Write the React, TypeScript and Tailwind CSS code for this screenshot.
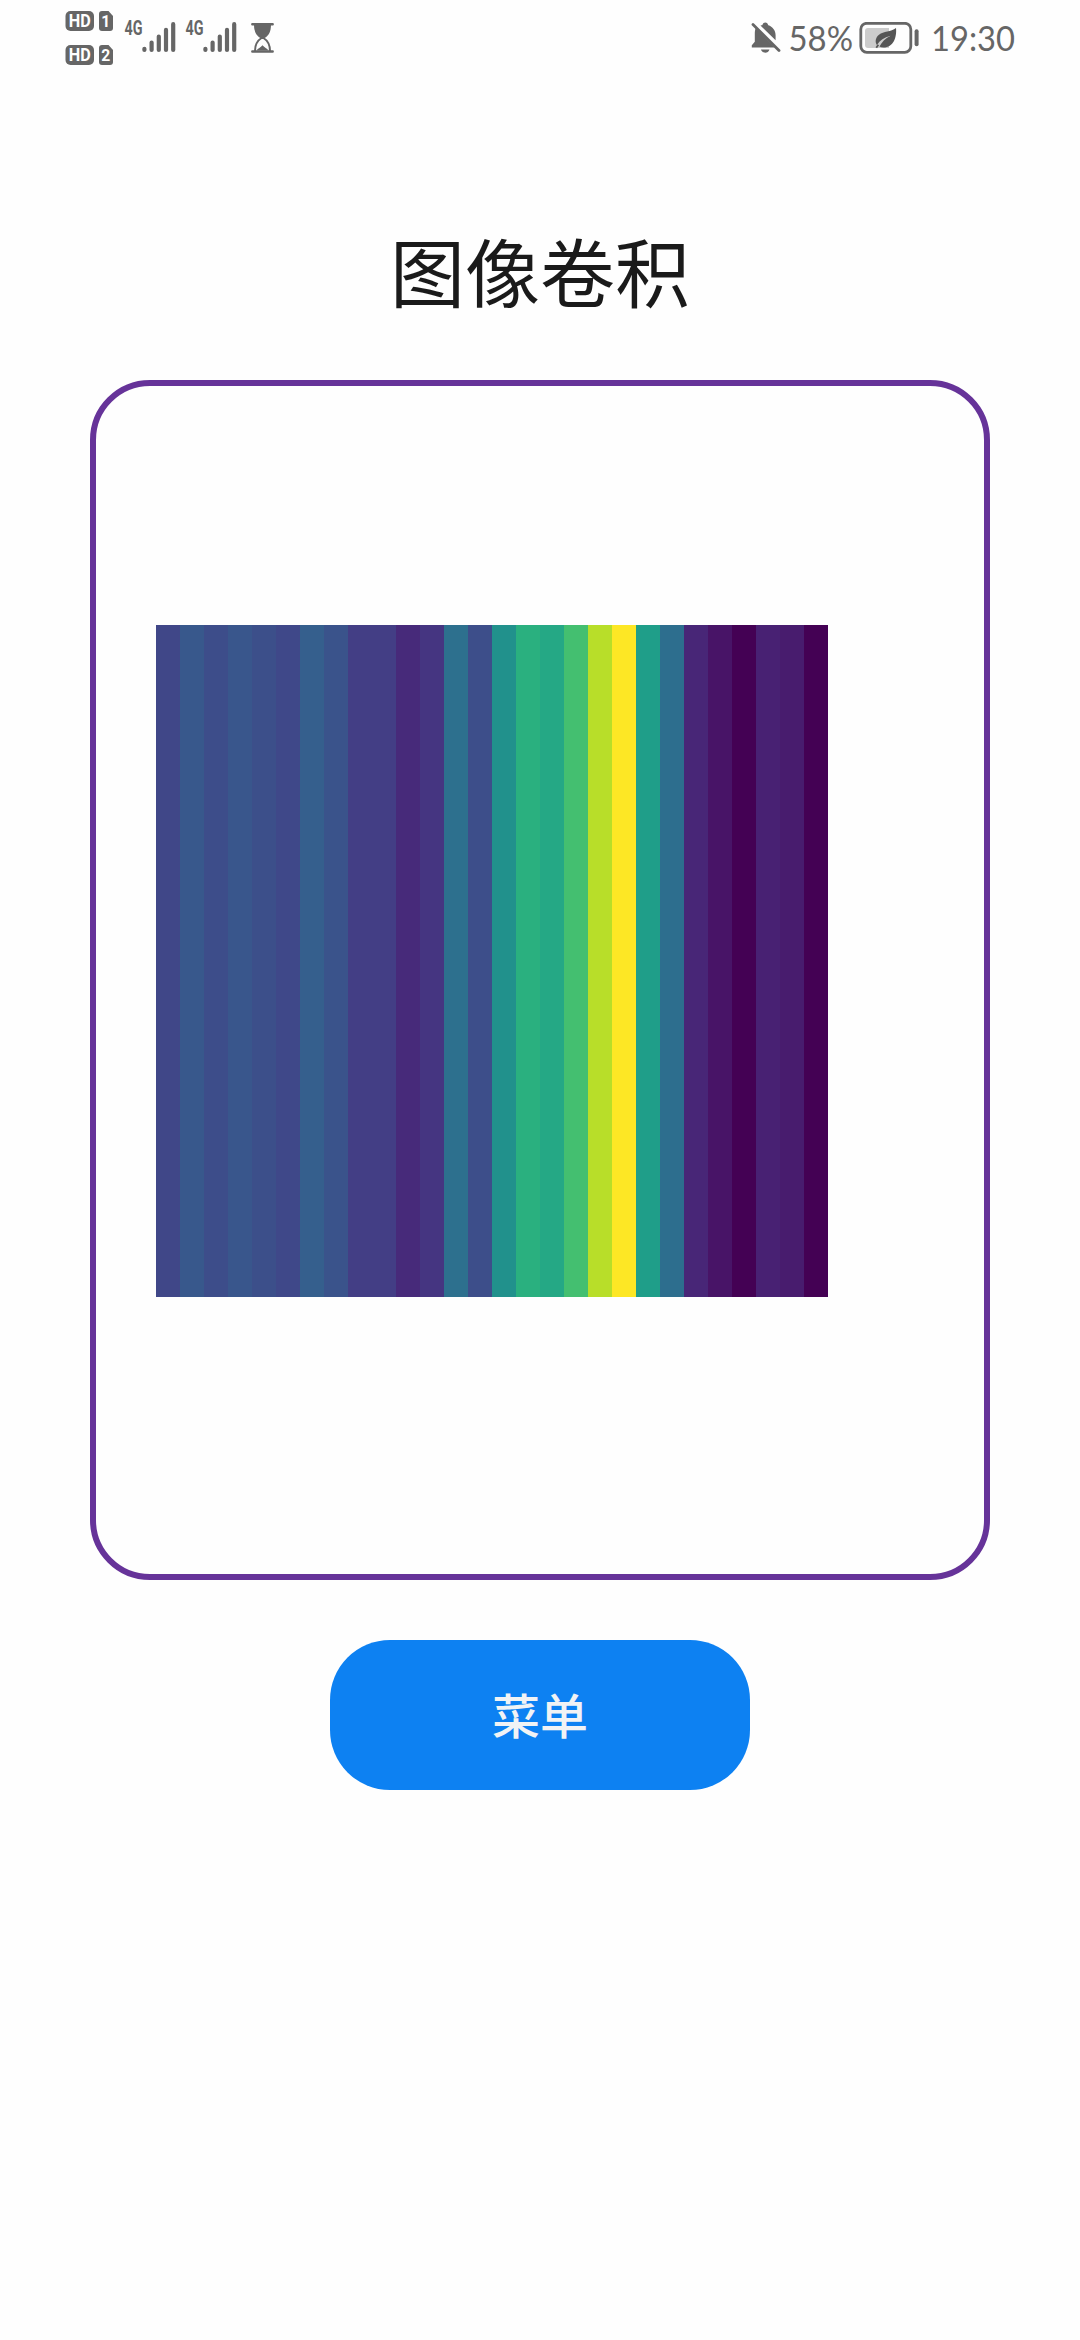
const BARS = [
  '#404788', '#38588c', '#3d4d8a', '#39568c', '#3c4f8a', '#3f4889', '#355f8d',
  '#3a538b', '#433e85', '#433e85', '#472a7a', '#453581', '#2d708e', '#3d4e8a',
  '#21918c', '#2ab07f', '#25a885', '#44bf70', '#b8de29', '#fde725', '#1f9e89',
  '#2d6e8e', '#482677', '#481467', '#440154', '#482173', '#481c6e', '#440154',
];

function HdBadge({ sim }: { sim: string }) {
  return (
    <svg width="48" height="20" viewBox="0 0 48 20" className="block overflow-visible">
      <rect x="0.500" y="0" width="28.500" height="20" rx="5" fill="#666" />
      <text x="14.700" y="16.200" fill="#fff" fontSize="17.500" fontWeight="700" textAnchor="middle" textLength="22" lengthAdjust="spacingAndGlyphs" fontFamily="Roboto, sans-serif">HD</text>
      <path d="M37 0h6.500l4.500 5v12a3 3 0 0 1-3 3h-8a3 3 0 0 1-3-3V3a3 3 0 0 1 3-3z" fill="#666" />
      <text x="40.800" y="16" fill="#fff" fontSize="17" fontWeight="700" textAnchor="middle" textLength="9" lengthAdjust="spacingAndGlyphs" fontFamily="Roboto, sans-serif">{sim}</text>
    </svg>
  );
}

function Signal() {
  return (
    <svg width="52" height="38" viewBox="0 -4 52 38" className="block overflow-visible">
      <text x="-0.500" y="15.300" fill="#666" fontSize="20" fontWeight="700" textLength="18" lengthAdjust="spacingAndGlyphs" fontFamily="Roboto, sans-serif">4G</text>
      <g stroke="#666" strokeWidth="4.200" strokeLinecap="round">
        <path d="M19.400 28.800v1.200M26.600 22.500v7.500M33.800 16.500v13.500M41 9.900v20.100M48.200 4.200v25.800" />
      </g>
    </svg>
  );
}

function Hourglass() {
  return (
    <svg width="24" height="30" viewBox="0 0 24 30" className="block">
      <path d="M1.300 1.300h20.400M1.300 28.500h20.400" stroke="#666" strokeWidth="2.400" strokeLinecap="round" />
      <path d="M3 2h17c0 6.500-2.500 11-6.500 13h-4C5.500 13 3 8.500 3 2z" fill="#666" />
      <path d="M4 28c0-7 2.500-10.500 6.500-13h2c4 2.500 6.500 6 6.500 13" fill="none" stroke="#666" strokeWidth="2" />
      <path d="M5.500 27.500c1.500-2.300 4-2.600 6-5.200 2 2.600 4.500 2.900 6 5.200z" fill="#666" />
    </svg>
  );
}

function MutedBell() {
  return (
    <svg width="30" height="32" viewBox="0 0 30 32" className="block">
      <path d="M4.700 6L23.700 25.500H.8v-2.200l3-3.500V12c0-2.500.3-4.500.9-6z" fill="#666" />
      <path d="M9.500 3.500c.6-.2 1.200-.2 1.700-.2C12 1.200 13 .6 14.300.6s2.300.6 3 2.700c4.200 1.300 7.300 5.200 7.300 10v5z" fill="#666" />
      <path d="M10 27.500h8.500c-.8 2.200-2.300 3.200-4.200 3.200S10.800 29.700 10 27.500z" fill="#666" />
      <path d="M2 2.500l26 26" stroke="#666" strokeWidth="2.800" strokeLinecap="round" />
    </svg>
  );
}

function Battery() {
  return (
    <svg width="60" height="32" viewBox="0 0 60 32" className="block">
      <rect x="1.800" y="1.300" width="50" height="29" rx="6" fill="none" stroke="#666" strokeWidth="2.800" />
      <path d="M9 6H30v20H9a3 3 0 0 1-3-3V9a3 3 0 0 1 3-3z" fill="#ccc" />
      <path d="M37 6c1 9-2.500 19.500-12.500 19.500-1.600 0-2.900-.3-4-.9 2.200-4.600 5.500-8.200 11-10.900-6.300 1.500-10.600 4.700-13.600 9.200C15.700 20 16.500 15.500 20 12.700 24.500 9.200 32 10 37 6z" fill="#555" />
      <path d="M17.300 25.800l2-3" stroke="#555" strokeWidth="1.800" />
      <rect x="55.600" y="7.300" width="4" height="17" rx="2" fill="#666" />
    </svg>
  );
}

function StatusBar() {
  return (
    <header className="flex h-[80px] items-start justify-between pl-[65px] pr-[65px]">
      <div className="flex items-start">
        <div className="flex flex-col gap-[14px] pt-[11px]">
          <HdBadge sim="1" />
          <HdBadge sim="2" />
        </div>
        <div className="ml-[12px] mt-[16px]"><Signal /></div>
        <div className="ml-[9px] mt-[16px]"><Signal /></div>
        <div className="ml-[13px] mt-[23px]"><Hourglass /></div>
      </div>
      <div className="flex items-start">
        <div className="mt-[22px]"><MutedBell /></div>
        <svg width="66" height="54" viewBox="0 0 66 54" className="ml-[6px] mt-[10px] block overflow-visible">
          <text x="1.500" y="41" fill="#666" fontSize="35" textLength="64.500" lengthAdjust="spacingAndGlyphs" fontFamily="Lato, sans-serif">58%</text>
        </svg>
        <div className="ml-[6px] mt-[22px]"><Battery /></div>
        <svg width="84" height="54" viewBox="0 0 84 54" className="ml-[12px] mt-[10px] block overflow-visible">
          <text x="0" y="41" fill="#666" fontSize="35" textLength="84" lengthAdjust="spacingAndGlyphs" fontFamily="Lato, sans-serif">19:30</text>
        </svg>
      </div>
    </header>
  );
}

export default function App() {
  return (
    <div className="flex h-[2340px] w-[1080px] flex-col overflow-hidden bg-[#fefefe] font-['Noto_Sans_CJK_SC',sans-serif]">
      <StatusBar />
      <main className="flex flex-col items-center pt-[139.500px]">
        <h1 className="h-[100px] text-[75px] leading-[100px] text-[#1a1a1a]">图像卷积</h1>
        <section className="mt-[60px] h-[1200px] w-[900px] rounded-[60px] border-[6px] border-[#663399] pl-[60px] pt-[239.500px]">
          <div className="flex size-[672px]">
            {BARS.map((color, i) => (
              <div key={i} className="h-full w-6" style={{ backgroundColor: color }} />
            ))}
          </div>
        </section>
        <button className="mt-[60px] flex h-[150px] w-[420px] items-center justify-center rounded-[60px] bg-[#0d81f2] pb-[3px] text-[48px] font-medium leading-none text-[#f1f3f5]">
          菜单
        </button>
      </main>
    </div>
  );
}
